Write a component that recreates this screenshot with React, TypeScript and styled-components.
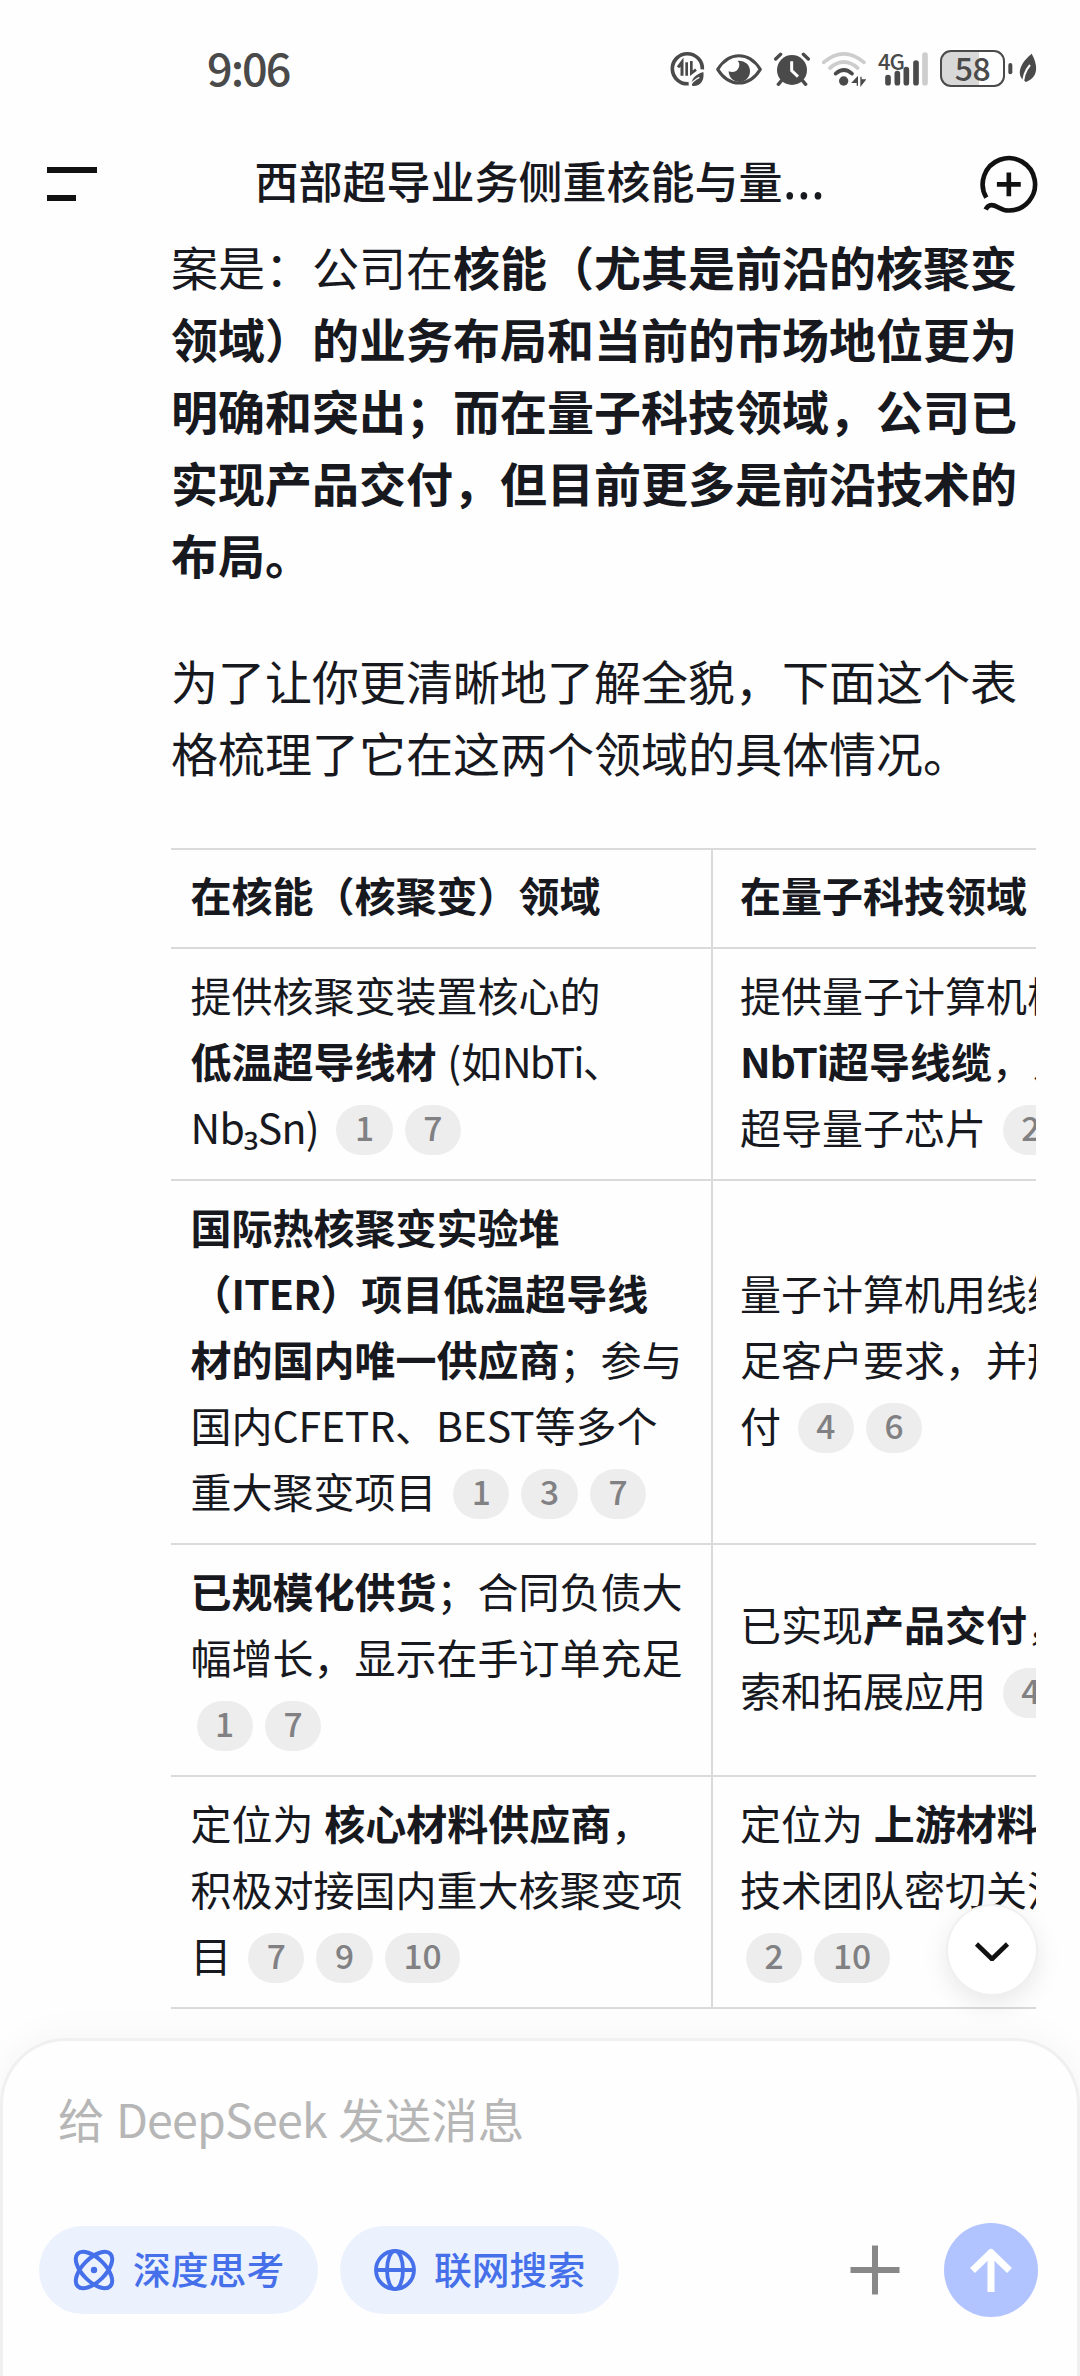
import React from "react";
import styled, { createGlobalStyle, css } from "styled-components";

const GlobalStyle = createGlobalStyle`
  * { box-sizing: border-box; }
  body {
    margin: 0;
    background: #fefefe;
    font-family: "Noto Sans CJK SC", "Noto Sans", sans-serif;
    color: #17191f;
    text-spacing-trim: space-all;
  }
`;

const Screen = styled.div`
  width: 1080px;
  height: 2376px;
  display: flex;
  flex-direction: column;
  overflow: hidden;
`;

const StatusBar = styled.div`
  height: 140px;
  flex: none;
  display: flex;
  align-items: flex-start;
  justify-content: space-between;
  padding: 50px 43px 0 207px;
  color: #4a4a4a;
`;

const Clock = styled.div`
  margin-top: -2px;
  font-size: 45px;
  line-height: 37px;
  font-weight: 500;
  letter-spacing: -2px;
`;

const StatusIcons = styled.div`
  display: flex;
  align-items: flex-start;

  svg {
    display: block;
    flex: none;
  }
`;

const Gap = styled.span<{ $w: number }>`
  flex: none;
  width: ${(p) => p.$w}px;
`;

const Header = styled.header`
  height: 88px;
  flex: none;
  display: flex;
  align-items: center;
  justify-content: space-between;
  padding: 0 42px 0 47px;

  svg {
    display: block;
  }
`;

const MenuButton = styled.div`
  width: 54px;
  display: flex;
  flex-direction: column;
  gap: 22px;
`;

const MenuBar = styled.span<{ $w: number }>`
  width: ${(p) => p.$w}px;
  height: 6px;
  background: #111;
`;

const Title = styled.h1`
  margin: -8px 0 0;
  display: flex;
  align-items: baseline;
  font-size: 44px;
  line-height: 66px;
  font-weight: 500;
  white-space: nowrap;
`;

const Ellipsis = styled.span`
  font-family: "Noto Sans", sans-serif;
  font-size: 54px;
  font-weight: 400;
  line-height: 1;
  width: 44px;
`;

const Conversation = styled.main`
  position: relative;
  flex: 1;
  min-height: 0;
  padding: 2px 44px 0 171px;
`;

const Paragraph = styled.p`
  margin: 0 0 54px;
  font-size: 47px;
  line-height: 72px;
`;

const TableFrame = styled.div`
  margin-top: 60px;
  overflow: hidden;
`;

const Table = styled.div`
  width: 1082px;
  border-top: 2px solid #dadada;
`;

const Row = styled.div`
  display: grid;
  grid-template-columns: 542px 540px;
  border-bottom: 2px solid #dadada;
`;

const Cell = styled.div<{ $head?: boolean; $first?: boolean }>`
  display: flex;
  flex-direction: column;
  justify-content: center;
  padding: ${(p) => (p.$head ? 11 : 12)}px 0 20px ${(p) => (p.$first ? 19.5 : 27)}px;
  font-size: 41px;
  line-height: 66px;
  word-spacing: 1.5px;
  ${(p) => p.$first && css`border-right: 2px solid #dadada;`}
  ${(p) => p.$head && css`font-weight: 700;`}
`;

const Line = styled.div`
  height: 66px;
  white-space: pre;
`;

const Tracked = styled.span<{ $by: number }>`
  letter-spacing: ${(p) => p.$by}px;
`;

const Chip = styled.span`
  display: inline-block;
  height: 50px;
  padding: 0 18.6px 6px;
  margin: 0 6px;
  border-radius: 25px;
  background: #ededed;
  color: #818184;
  font-size: 33.5px;
  font-weight: 500;
  line-height: 44px;
  vertical-align: 3px;
`;

const ScrollDown = styled.div`
  position: absolute;
  right: 44px;
  bottom: 44px;
  width: 88px;
  height: 88px;
  border-radius: 50%;
  background: #fff;
  display: flex;
  align-items: center;
  justify-content: center;
  box-shadow: 0 0 0 2px #f0f0f0, 0 8px 28px rgba(0, 0, 0, 0.1);
`;

const Composer = styled.footer`
  position: relative;
  height: 338px;
  flex: none;
  border: 3px solid #f0f0f0;
  border-bottom: 0;
  border-radius: 66px 66px 0 0;
  background: #fefefe;
  box-shadow: 0 -4px 36px rgba(0, 0, 0, 0.04);
  padding: 42px 39px 0 36px;
`;

const Placeholder = styled.div`
  padding-left: 19px;
  height: 70px;
  font-size: 46.5px;
  line-height: 70px;
  word-spacing: 1px;
  color: #b6b6b6;
`;

const Actions = styled.div`
  margin-top: 70px;
  height: 94px;
  display: flex;
  align-items: center;
`;

const Toggle = styled.div`
  width: 279px;
  height: 88px;
  margin-right: 22px;
  padding-left: 34px;
  border-radius: 44px;
  background: #ebf2fe;
  color: #4670ea;
  display: flex;
  align-items: center;
  gap: 18px;
  font-size: 37.8px;
  line-height: 88px;
  font-weight: 500;

  span {
    margin-top: -5px;
  }
`;

const Spacer = styled.div`
  flex: 1;
`;

const Send = styled.div`
  width: 94px;
  height: 94px;
  margin-left: 44px;
  border-radius: 50%;
  background: #b2c4ff;
  display: flex;
  align-items: center;
  justify-content: center;
`;

const BatteryBox = styled.div`
  width: 65px;
  height: 37px;
  border: 2.5px solid #4a4a4a;
  border-radius: 11px;
  background: linear-gradient(90deg, #d8d8d8 0 37px, #fefefe 37px);
  display: flex;
  align-items: center;
  justify-content: center;
  font-size: 32px;
  line-height: 32px;
  font-weight: 500;

  span {
    margin-top: -4px;
    letter-spacing: -0.5px;
  }
`;

const SignalLabel = styled.span`
  position: absolute;
  left: 0;
  top: 0;
  font-size: 22px;
  line-height: 16px;
  font-weight: 500;
  letter-spacing: -1px;
`;

const Signal = styled.div`
  position: relative;
  margin-top: 2px;
`;

const ink = "#4a4a4a";

const DataSaverIcon = () => (
  <svg width="35" height="37" viewBox="89 60 105 111">
    <path d="M145 161 A45 45 0 1 1 186 118" fill="none" stroke={ink} strokeWidth="11" />
    <path d="M113 112 L125 96 V137" fill="none" stroke={ink} strokeWidth="9" />
    <path d="M139 137 V97 M153 93 V130 L167 119" fill="none" stroke={ink} strokeWidth="8" />
    <path d="M189 126 C193 152 180 170 156 168 C149 150 163 134 189 126 Z" fill={ink} />
    <path d="M148 170 Q156 152 177 142" fill="none" stroke="#fefefe" strokeWidth="4" />
  </svg>
);

const EyeIcon = () => (
  <svg width="46" height="37" viewBox="228 60 138 111">
    <path
      d="M233 118 C250 91 272 77 297 77 S344 91 361 118 C344 145 322 159 297 159 S250 145 233 118 Z"
      fill="none"
      stroke={ink}
      strokeWidth="9"
      strokeLinejoin="round"
    />
    <path d="M297 92 A32 32 0 1 1 266 124 C279 129 292 124 296 113 C299 105 299 99 293 93 Z" fill={ink} />
  </svg>
);

const AlarmIcon = () => (
  <svg width="36" height="37" viewBox="402 60 108 111">
    <circle cx="456" cy="120" r="45" fill={ink} />
    <path
      d="M407 87 L422 73 M505 87 L490 73 M425 151 L415 163 M487 151 L497 163"
      stroke={ink}
      strokeWidth="10"
      strokeLinecap="round"
    />
    <path d="M455 94 V122 L474 140" fill="none" stroke="#fefefe" strokeWidth="9" />
  </svg>
);

const WifiIcon = () => (
  <svg width="44" height="37" viewBox="547 60 132 111">
    <g fill="none" strokeWidth="11" strokeLinecap="round">
      <path d="M552 97 Q612 46 673 97" stroke="#cdcdcd" />
      <path d="M571 114 Q612 78 654 114" stroke="#cdcdcd" />
      <path d="M588 131 Q613 109 637 131" stroke={ink} />
    </g>
    <circle cx="612" cy="153" r="14" fill={ink} />
    <path d="M653 142 V167 M653 142 L639 157 H653 Z" stroke={ink} strokeWidth="4" fill={ink} />
    <path d="M664 140 V165 L676 150 H664 Z" stroke={ink} strokeWidth="4" fill={ink} />
  </svg>
);

const SignalIcon = () => (
  <svg width="50" height="35" viewBox="714 66 150 105">
    <g strokeWidth="17" strokeLinecap="round" stroke={ink}>
      <path d="M744 143 V158" />
      <path d="M772 131 V158" />
      <path d="M799 119 V158" />
      <path d="M828 99 V158" />
      <path d="M855 75 V158" stroke="#cdcdcd" />
    </g>
  </svg>
);

const BatteryNub = () => (
  <svg width="5" height="37" viewBox="1105 60 15 111">
    <rect x="1106" y="99" width="12" height="34" rx="6" fill={ink} />
  </svg>
);

const LeafIcon = () => (
  <svg width="18" height="37" viewBox="1138 60 54 111">
    <path d="M1176 71 C1196 108 1196 140 1159 156 C1130 142 1134 105 1176 71 Z" fill={ink} />
    <path d="M1150 166 C1150 138 1158 120 1171 105" fill="none" stroke="#fefefe" strokeWidth="6" />
  </svg>
);

const NewChatIcon = () => (
  <svg width="58" height="59" viewBox="1020 374 175 177">
    <path
      d="M1039 502 A79 79 0 1 1 1107 541 C1077 541 1070 521 1051 525 C1043 527 1040 532 1037 538"
      fill="none"
      stroke="#111"
      strokeWidth="14"
    />
    <path d="M1107 426 V498 M1071 462 H1143" stroke="#111" strokeWidth="14" />
  </svg>
);

const ThinkIcon = () => (
  <svg width="42" height="42" viewBox="0 0 42 42" fill="none" stroke="currentColor" strokeWidth="4">
    <ellipse cx="21" cy="21" rx="23" ry="11.5" transform="rotate(45 21 21)" />
    <ellipse cx="21" cy="21" rx="23" ry="11.5" transform="rotate(-45 21 21)" />
    <circle cx="21" cy="21" r="3.2" fill="currentColor" stroke="none" />
  </svg>
);

const GlobeIcon = () => (
  <svg width="42" height="42" viewBox="0 0 42 42" fill="none" stroke="currentColor" strokeWidth="3.8">
    <circle cx="21" cy="21" r="19" />
    <ellipse cx="21" cy="21" rx="8" ry="19" />
    <path d="M2 21 H40" />
  </svg>
);

const PlusIcon = () => (
  <svg width="50" height="50" viewBox="0 0 50 50" stroke="#888" strokeWidth="6">
    <path d="M25 0.5 V49.5 M0.5 25 H49.5" />
  </svg>
);

const ArrowIcon = () => (
  <svg width="44" height="46" viewBox="0 0 44 46" fill="none" stroke="#fff" strokeWidth="7" strokeLinejoin="round">
    <path d="M22 45 V6 M3.5 23.5 L22 5.5 L40.5 23.5" />
  </svg>
);

const ChevronIcon = () => (
  <svg width="36" height="22" viewBox="0 0 36 22" fill="none" stroke="#111" strokeWidth="4.6" strokeLinejoin="round">
    <path d="M2.5 5 L18 20 L33.5 5" />
  </svg>
);

const Chips = ({ ids }: { ids: number[] }) => (
  <>
    {ids.map((id) => (
      <Chip key={id}>{id}</Chip>
    ))}
  </>
);

export default function App() {
  return (
    <>
      <GlobalStyle />
      <Screen>
        <StatusBar>
          <Clock>9:06</Clock>
          <StatusIcons>
            <DataSaverIcon />
            <Gap $w={11} />
            <EyeIcon />
            <Gap $w={12} />
            <AlarmIcon />
            <Gap $w={12} />
            <WifiIcon />
            <Gap $w={12} />
            <Signal>
              <SignalLabel>4G</SignalLabel>
              <SignalIcon />
            </Signal>
            <Gap $w={12} />
            <BatteryBox>
              <span>58</span>
            </BatteryBox>
            <Gap $w={3} />
            <BatteryNub />
            <Gap $w={6} />
            <LeafIcon />
          </StatusIcons>
        </StatusBar>

        <Header>
          <MenuButton>
            <MenuBar $w={50} />
            <MenuBar $w={29} />
          </MenuButton>
          <Title>
            西部超导业务侧重核能与量<Ellipsis>…</Ellipsis>
          </Title>
          <NewChatIcon />
        </Header>

        <Conversation>
          <Paragraph>
            案是：公司在
            <b>
              核能（尤其是前沿的核聚变领域）的业务布局和当前的市场地位更为明确和突出；而在量子科技领域，公司已实现产品交付，但目前更多是前沿技术的布局。
            </b>
          </Paragraph>
          <Paragraph>为了让你更清晰地了解全貌，下面这个表格梳理了它在这两个领域的具体情况。</Paragraph>

          <TableFrame>
            <Table>
              <Row>
                <Cell $head $first>
                  <Line>在核能（核聚变）领域</Line>
                </Cell>
                <Cell $head>
                  <Line>在量子科技领域</Line>
                </Cell>
              </Row>
              <Row>
                <Cell $first>
                  <Line>提供核聚变装置核心的</Line>
                  <Line>
                    <b>低温超导线材</b> (如<Tracked $by={-1.9}>NbTi</Tracked>、
                  </Line>
                  <Line>
                    <Tracked $by={-0.7}>Nb₃Sn</Tracked>) <Chips ids={[1, 7]} />
                  </Line>
                </Cell>
                <Cell>
                  <Line>提供量子计算机核心的</Line>
                  <Line>
                    <b>
                      <Tracked $by={-1.1}>NbTi</Tracked>超导线缆
                    </b>
                    ，及
                  </Line>
                  <Line>
                    超导量子芯片 <Chips ids={[2]} />
                  </Line>
                </Cell>
              </Row>
              <Row>
                <Cell $first>
                  <Line>
                    <b>国际热核聚变实验堆</b>
                  </Line>
                  <Line>
                    <b>
                      （<Tracked $by={-0.9}>ITER</Tracked>）项目低温超导线
                    </b>
                  </Line>
                  <Line>
                    <b>材的国内唯一供应商</b>；参与
                  </Line>
                  <Line>
                    国内<Tracked $by={-0.2}>CFETR</Tracked>、<Tracked $by={-0.2}>BEST</Tracked>等多个
                  </Line>
                  <Line>
                    重大聚变项目 <Chips ids={[1, 3, 7]} />
                  </Line>
                </Cell>
                <Cell>
                  <Line>量子计算机用线缆满</Line>
                  <Line>足客户要求，并形成</Line>
                  <Line>
                    付 <Chips ids={[4, 6]} />
                  </Line>
                </Cell>
              </Row>
              <Row>
                <Cell $first>
                  <Line>
                    <b>已规模化供货</b>；合同负债大
                  </Line>
                  <Line>幅增长，显示在手订单充足</Line>
                  <Line>
                    <Chips ids={[1, 7]} />
                  </Line>
                </Cell>
                <Cell>
                  <Line>
                    已实现<b>产品交付</b>，
                  </Line>
                  <Line>
                    索和拓展应用 <Chips ids={[4]} />
                  </Line>
                </Cell>
              </Row>
              <Row>
                <Cell $first>
                  <Line>
                    定位为 <b>核心材料供应商</b>，
                  </Line>
                  <Line>积极对接国内重大核聚变项</Line>
                  <Line>
                    目 <Chips ids={[7, 9, 10]} />
                  </Line>
                </Cell>
                <Cell>
                  <Line>
                    定位为 <b>上游材料</b>
                  </Line>
                  <Line>技术团队密切关注</Line>
                  <Line>
                    <Chips ids={[2, 10]} />
                  </Line>
                </Cell>
              </Row>
            </Table>
          </TableFrame>

          <ScrollDown>
            <ChevronIcon />
          </ScrollDown>
        </Conversation>

        <Composer>
          <Placeholder>
            给 <Tracked $by={-0.8}>DeepSeek</Tracked> 发送消息
          </Placeholder>
          <Actions>
            <Toggle>
              <ThinkIcon />
              <span>深度思考</span>
            </Toggle>
            <Toggle>
              <GlobeIcon />
              <span>联网搜索</span>
            </Toggle>
            <Spacer />
            <PlusIcon />
            <Send>
              <ArrowIcon />
            </Send>
          </Actions>
        </Composer>
      </Screen>
    </>
  );
}
